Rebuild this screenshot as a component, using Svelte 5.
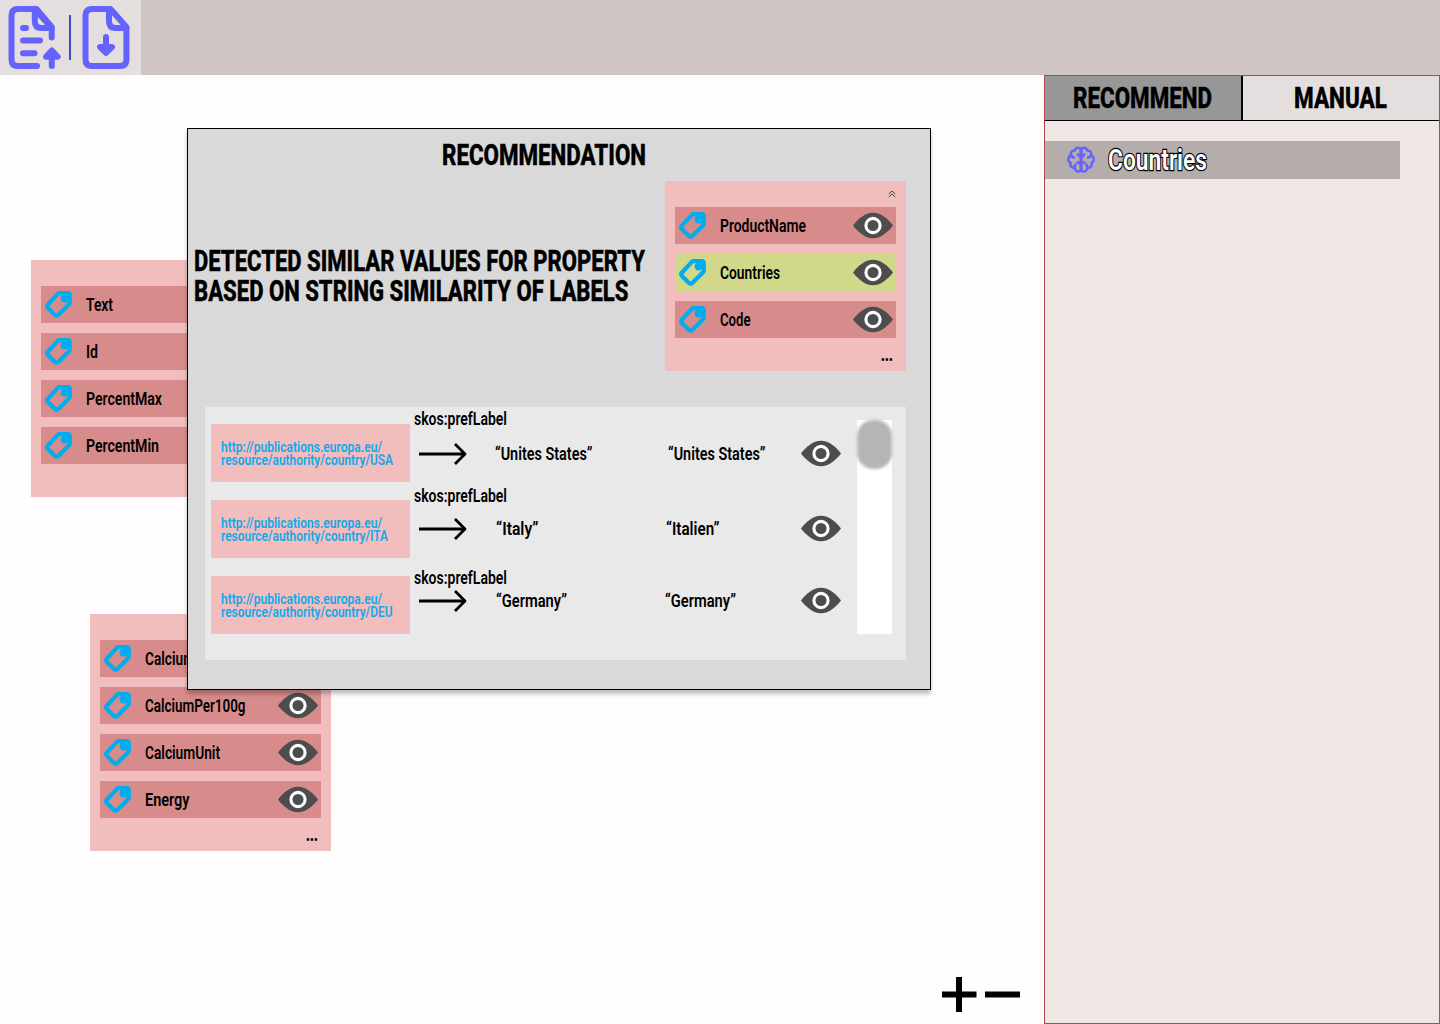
<script>
  // Label widths are in pixels: the text is condensed to fill them.
  const leftCard = [
    { name: 'Text', w: 27 },
    { name: 'Id', w: 12 },
    { name: 'PercentMax', w: 76 },
    { name: 'PercentMin', w: 73 }
  ];
  const bottomCard = [
    { name: 'Calcium', w: 50 },
    { name: 'CalciumPer100g', w: 100.5 },
    { name: 'CalciumUnit', w: 75 },
    { name: 'Energy', w: 44.5 }
  ];
  const previewCard = [
    { name: 'ProductName', w: 86 },
    { name: 'Countries', w: 60, match: true },
    { name: 'Code', w: 30.5 }
  ];
  const uris = [
    { tail: 'resource/authority/country/USA', w: 172 },
    { tail: 'resource/authority/country/ITA', w: 167 },
    { tail: 'resource/authority/country/DEU', w: 171.5 }
  ];
  const matches = [
    { a: '“Unites States”', aw: 97.5, ax: 0, b: '“Unites States”', bw: 97.5, bx: 0 },
    { a: '“Italy”', aw: 42.5, ax: 1, b: '“Italien”', bw: 53.5, bx: -2 },
    { a: '“Germany”', aw: 71, ax: 1, b: '“Germany”', bw: 71, bx: -3 }
  ];
</script>

{#snippet label(text, w, h, base, kind, dx = 0)}
  <svg class="label {kind}" width={w} height={h}>
    <text x={dx} y={base} textLength={w} lengthAdjust="spacingAndGlyphs">{text}</text>
  </svg>
{/snippet}

{#snippet tag()}
  <svg class="tag" width="27" height="27" viewBox="0 0 27 27">
    <path d="M14.500 2.200H22.600Q24.800 2.200 24.800 4.400V11.600Q24.800 12.600 24.100 13.300L13.300 23.900Q11.600 25.400 9.900 23.900L3 17Q1.400 15.200 3 13.500L12.900 2.900Q13.500 2.200 14.500 2.200Z" />
    <circle cx="19.600" cy="7.600" r="4" />
    <path class="corner" d="M20 2H25V8H20Z" />
  </svg>
{/snippet}

{#snippet eye()}
  <svg class="eye" width="40" height="26" viewBox="0 .5 40 26">
    <path d="M0 13C5 6.500 12 .3 20 .3S35 6.500 40 13C35 19.500 28 25.700 20 25.700S5 19.500 0 13Z" />
    <circle cx="20" cy="13" r="7.100" />
  </svg>
{/snippet}

{#snippet card(rows, chevron, dots)}
  <div class="card-top">
    {#if chevron}
      <svg width="8" height="8" viewBox="0 0 8 8"><path d="M.8 4L4 1L7.200 4M.8 7L4 4L7.200 7" /></svg>
    {/if}
  </div>
  <div class="rows">
    {#each rows as row}
      <div class="row" class:match={row.match}>
        {@render tag()}
        <div class="name">{@render label(row.name, row.w, 37, 25, 'body')}</div>
        {@render eye()}
      </div>
    {/each}
  </div>
  {#if dots}
    <svg class="dots" width="12" height="4" viewBox="0 0 12 4"><path d="M.7 1.600H3.200M4.700 1.600H7.200M8.700 1.600H11.200" /></svg>
  {/if}
{/snippet}

<div class="app">
  <header>
    <div class="tools">
      <svg width="141" height="75" viewBox="0 0 141 75">
        <g class="file">
          <path d="M37 66H18Q11.500 66 11.500 59.500V15.500Q11.500 9 18 9H36.500L51.700 27V37.500" />
          <path d="M34.800 9V21Q34.800 28 41.500 28H51.700M34.800 9L51.700 28" />
          <path d="M23 28H26M23 40.500H40M23 53.200H34.500" />
          <path d="M51.800 66V51M46 56.700L51.800 50.500L57.700 56.700Z" />
          <path d="M92 9H110.500L126.400 27V59.500Q126.400 66 120 66H92Q85.500 66 85.500 59.500V15.500Q85.500 9 92 9Z" />
          <path d="M109 9V21Q109 28 115.500 28H126.400" />
          <path d="M106 37V52M100 47L106 53L112 47Z" />
        </g>
        <path class="divider" d="M70 15V60" />
      </svg>
    </div>
  </header>

  <div class="main">
    <section class="canvas">
      <div class="card left">{@render card(leftCard, false, false)}</div>
      <div class="card bottom">{@render card(bottomCard, false, true)}</div>

      <div class="dialog">
        <div class="title">{@render label('RECOMMENDATION', 204, 30, 25, 'head')}</div>
        <div class="summary">
          <div class="message">
            {@render label('DETECTED SIMILAR VALUES FOR PROPERTY', 451, 30, 24, 'head')}
            {@render label('BASED ON STRING SIMILARITY OF LABELS', 434.5, 30, 24, 'head')}
          </div>
          <div class="card preview">{@render card(previewCard, true, true)}</div>
        </div>
        <div class="results">
          <div class="uris">
            {#each uris as uri}
              <div class="uri">
                {@render label('http://publications.europa.eu/', 161, 13, 10, 'link')}
                {@render label(uri.tail, uri.w, 13, 10, 'link')}
              </div>
            {/each}
          </div>
          <div class="relations">
            {#each matches as m}
              <div class="relation">
                {@render label('skos:prefLabel', 93, 20, 16, 'body')}
                <div class="values">
                  <svg class="arrow" width="48" height="24" viewBox="0 0 48 24"><path d="M0 12H46M36 2L46 12L36 22" /></svg>
                  {@render label(m.a, m.aw, 26, 19, 'body', m.ax)}
                  {@render label(m.b, m.bw, 26, 19, 'body', m.bx)}
                  {@render eye()}
                </div>
              </div>
            {/each}
          </div>
          <div class="scroll"><div class="thumb"></div></div>
        </div>
      </div>

      <div class="zoom">
        <svg width="35" height="35" viewBox="0 0 35 35"><path d="M0 17.500H34.500M17 0V35" /></svg>
        <svg width="35" height="35" viewBox="0 0 35 35"><path d="M0 17.500H35" /></svg>
      </div>
    </section>

    <aside>
      <nav>
        <div class="tab active">{@render label('RECOMMEND', 139, 44, 32, 'head', -1)}</div>
        <div class="tab">{@render label('MANUAL', 93, 44, 32, 'head', -1)}</div>
      </nav>
      <div class="item">
        <svg class="brain" width="28" height="28" viewBox="0 0 28 28">
          <path d="M14 4.500C13.500 .9 8.500 .9 7.800 4.600C4.500 4.300 3 6.800 4.200 9.300C.6 10.500 .4 15.500 3.600 17C2.500 20 4.800 22.300 7.600 21.600C8.500 26.600 13.700 26.400 14 23Z" />
          <path d="M14 4.500C14.500 .9 19.500 .9 20.200 4.600C23.500 4.300 25 6.800 23.800 9.300C27.400 10.500 27.600 15.500 24.400 17C25.500 20 23.200 22.300 20.400 21.600C19.500 26.600 14.300 26.400 14 23Z" />
          <path d="M14 4V24M11 8.500Q11.500 10 14 10Q16.500 10 17 8.500M10.500 16.500Q13.500 16.500 14 19Q14.500 16.500 17.500 16.500M4.500 9.500Q5 11.500 7 11.500M23.500 9.500Q23 11.500 21 11.500M7.600 21.500Q7.600 19 9 18.800M20.400 21.500Q20.400 19 19 18.800" />
        </svg>
        {@render label('Countries', 99, 38, 29, 'outlined')}
      </div>
    </aside>
  </div>
</div>

<style>
  :global(body) { margin: 0; background: #fffdfd; }
  .app {
    width: 1440px;
    height: 1024px;
    display: flex;
    flex-direction: column;
    overflow: hidden;
    font-family: Roboto, "Liberation Sans", sans-serif;
  }
  svg { display: block; flex: none; }
  header { height: 75px; flex: none; background: #cec4c2; }
  .tools { width: 141px; height: 75px; background: #e4dfde; }
  .file { fill: none; stroke: #6563ff; stroke-width: 6; stroke-linecap: round; stroke-linejoin: round; }
  .divider { stroke: #3c49c9; stroke-width: 2; }

  .main { flex: 1; display: flex; min-height: 0; }
  .canvas { position: relative; flex: 1; }

  .label { overflow: visible; }
  .body { font-size: 18px; font-weight: 600; }
  .head { font-size: 29.500px; font-weight: 800; stroke: #000; stroke-width: .4px; }
  .link { font-size: 15px; font-weight: 600; fill: #12a9ea; }
  .outlined {
    font-size: 29.500px;
    font-weight: 600;
    fill: #fff;
    stroke: #000;
    stroke-width: 2.400px;
    paint-order: stroke;
  }

  .card { width: 241px; box-sizing: border-box; padding: 0 10px; background: #f1bdbd; }
  .left { position: absolute; left: 31px; top: 185px; height: 237px; }
  .bottom { position: absolute; left: 90px; top: 539px; height: 237px; }
  .preview { height: 190px; flex: none; }
  .card-top { height: 26px; display: flex; justify-content: flex-end; align-items: center; }
  .card-top svg { fill: none; stroke: #333; stroke-width: .9; }
  .rows { display: flex; flex-direction: column; gap: 10px; }
  .row { height: 37px; display: flex; align-items: center; padding: 0 3px 0 4px; background: #d78b8a; }
  .row.match { background: #d1d88a; }
  .name { flex: 1; margin-left: 14px; }
  .tag path { fill: none; stroke: #00adef; stroke-width: 4.200; stroke-linejoin: round; }
  .tag circle { fill: #00adef; }
  .tag .corner { fill: #00adef; stroke-width: 1; }
  .eye { overflow: visible; }
  .eye path { fill: #4d4d4d; }
  .eye circle { fill: none; stroke: #fff; stroke-width: 3.100; }
  .dots { margin: 20px 3px 0 auto; }
  .dots path { stroke: #000; stroke-width: 2.500; }

  .dialog {
    position: absolute;
    left: 187px;
    top: 53px;
    width: 744px;
    height: 562px;
    box-sizing: border-box;
    border: 1px solid #000;
    background: #d9d9d9;
    box-shadow: 0 4px 4px rgba(0, 0, 0, .25);
  }
  .title { height: 41px; padding: 11px 0 0 254px; box-sizing: border-box; }
  .summary { display: flex; justify-content: space-between; padding: 11px 24px 0 6px; }
  .message { padding-top: 66px; }
  .results {
    width: 701px;
    height: 253px;
    box-sizing: border-box;
    margin: 36px 0 0 17px;
    padding-left: 6px;
    display: flex;
    background: #e9e9e9;
  }
  .uris { display: flex; flex-direction: column; gap: 18px; padding-top: 17px; }
  .uri { width: 199px; height: 58px; box-sizing: border-box; padding: 18px 10px 0; background: #f1bdbd; }
  .relations { width: 427px; padding: 2px 0 0 4px; }
  .values {
    display: grid;
    grid-template-columns: 76px 173px 133px 40px;
    align-items: center;
    height: 26px;
    padding: 12px 0 19px 5px;
  }
  .relation:nth-child(2) .values { padding: 10px 0 26px 5px; }
  .relation:nth-child(3) .values { padding: 0 0 0 5px; }
  .arrow path { fill: none; stroke: #000; stroke-width: 2.800; stroke-linejoin: round; }
  .scroll { width: 35px; height: 214px; margin: 13px 0 0 16px; background: #fff; }
  .thumb { height: 49px; border-radius: 16px; background: #b5b5b5; filter: blur(1.500px); }

  .zoom { position: absolute; left: 942px; bottom: 12px; display: flex; gap: 8px; }
  .zoom path { stroke: #000; stroke-width: 6; }

  aside { width: 396px; box-sizing: border-box; border: 1px solid #b84646; background: #efe6e6; }
  nav { height: 44px; display: flex; border-bottom: 1px solid #000; }
  .tab { flex: 1; display: flex; justify-content: center; background: #e4dfde; }
  .tab.active { background: #979797; border-right: 2px solid #000; }
  .item { width: 355px; height: 38px; margin-top: 20px; display: flex; align-items: center; background: #b5adab; }
  .brain { margin: 0 13px 0 22px; fill: none; stroke: #6563ff; stroke-width: 2.500; stroke-linecap: round; stroke-linejoin: round; }
</style>
